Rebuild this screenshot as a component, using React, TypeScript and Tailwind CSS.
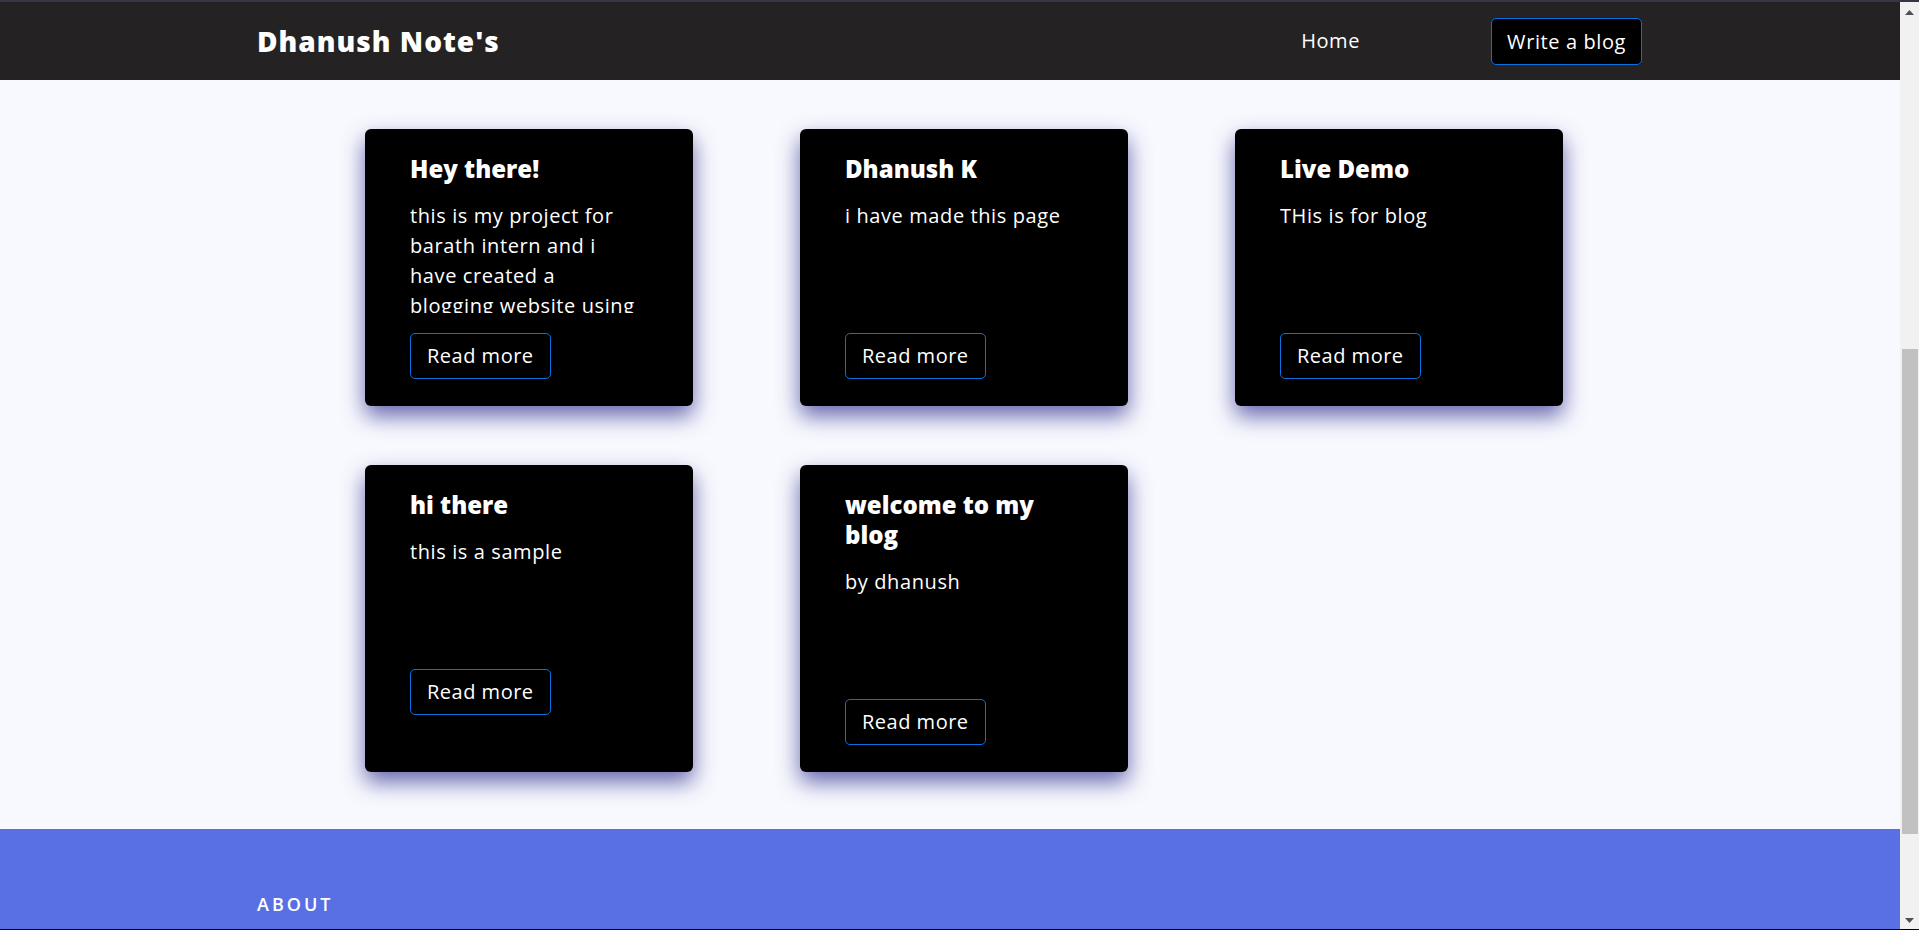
import React from "react";

const cards: { title: string; lines: string[] }[] = [
  {
    title: "Hey there!",
    lines: [
      "this is my project for",
      "barath intern and i",
      "have created a",
      "blogging website using",
    ],
  },
  { title: "Dhanush K", lines: ["i have made this page"] },
  { title: "Live Demo", lines: ["THis is for blog"] },
  { title: "hi there", lines: ["this is a sample"] },
  { title: "welcome to my blog", lines: ["by dhanush"] },
];

function Card({ title, lines }: { title: string; lines: string[] }) {
  return (
    <div className="bg-black rounded-[6px] shadow-[0_10px_22px_rgba(40,40,140,0.7)] pl-[45px] pr-[40px] pt-[25px] pb-[27px] flex flex-col items-start">
      <h2 className="text-white text-[24px] leading-[30px] font-extrabold">{title}</h2>
      <p className="text-white text-[20px] leading-[30px] tracking-[0.6px] mt-[17px] h-[112px] overflow-hidden whitespace-nowrap">
        {lines.map((l, i) => (
          <React.Fragment key={i}>
            {i > 0 && <br />}
            {l}
          </React.Fragment>
        ))}
      </p>
      <button className="mt-[20px] border border-[#0b6fe0] rounded-[5px] px-[16px] py-[8px] text-white text-[20px] leading-[28px] tracking-[0.5px] bg-black">
        Read more
      </button>
    </div>
  );
}

export default function App() {
  return (
    <div
      className="w-[1919px] h-[930px] overflow-hidden flex flex-col bg-[#f8f9fe]"
      style={{ fontFamily: '"Open Sans", "Noto Sans", sans-serif' }}
    >
      <div className="h-[2px] bg-[#3b3446] shrink-0" />
      <div className="flex flex-1 min-h-0">
        <div className="w-[1900px] flex flex-col">
          <nav className="h-[78px] bg-[#242223] flex items-center pl-[257px] pr-[258px] shrink-0">
            <div className="text-white text-[28px] font-extrabold tracking-[1px] leading-none">Dhanush Note's</div>
            <div className="flex-1" />
            <a className="text-white text-[20px] tracking-[0.6px] mr-[131px]">Home</a>
            <button className="bg-black border border-[#0b6fe0] rounded-[5px] px-[15px] py-[7px] text-white text-[20px] tracking-[0.6px] leading-[31px]">
              Write a blog
            </button>
          </nav>
          <main className="h-[749px] shrink-0 pt-[49px] pl-[365px]">
            <div className="grid grid-cols-[328px_328px_328px] gap-x-[107px] gap-y-[59px] items-stretch">
              {cards.map((c) => (
                <Card key={c.title} title={c.title} lines={c.lines} />
              ))}
            </div>
          </main>
          <footer className="h-[100px] bg-[#5870e3] pl-[257px] pt-[63px] shrink-0">
            <div className="text-white text-[18px] font-semibold tracking-[3px] leading-[24px]">ABOUT</div>
          </footer>
        </div>
        <div className="w-[19px] bg-[#f1f1f1] flex flex-col items-center">
          <svg width="9" height="5" viewBox="0 0 9 5" className="mt-[8px]">
            <path d="M0 5 L4.5 0 L9 5 Z" fill="#505050" />
          </svg>
          <div className="h-[334px]" />
          <div className="w-[16px] h-[485px] bg-[#c1c1c1]" />
          <div className="flex-1" />
          <svg width="9" height="5" viewBox="0 0 9 5" className="mb-[6px]">
            <path d="M0 0 L9 0 L4.5 5 Z" fill="#505050" />
          </svg>
        </div>
      </div>
      <div className="h-[1px] bg-black shrink-0" />
    </div>
  );
}
